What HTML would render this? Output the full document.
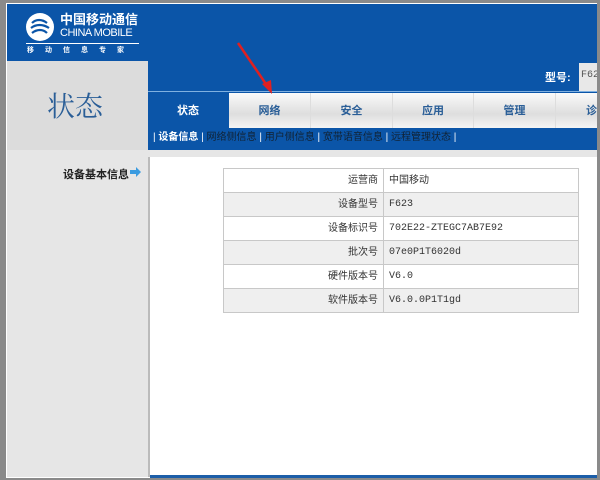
<!DOCTYPE html>
<html><head><meta charset="utf-8"><style>
*{margin:0;padding:0;box-sizing:border-box}
body{width:600px;height:480px;overflow:hidden;background:#8a8a8a;font-family:"Liberation Sans","Noto Sans CJK SC",sans-serif;position:relative}
.a{position:absolute}
td{border:1px solid #c8c8c8;height:24px;padding:0 5px;vertical-align:middle;line-height:14px}
td:first-child{text-align:right;width:160px}
td+td{font-family:'Liberation Mono','Noto Sans CJK SC',monospace}
tr:nth-child(even){background:#efefef}
</style></head><body>
<div class="a" style="left:6px;top:3px;width:591px;height:475px;background:#fff"></div>
<div class="a" style="left:7px;top:4px;width:590px;height:57px;background:#0b55a8"></div>
<svg class="a" style="left:25px;top:12px" width="30" height="30" viewBox="0 0 30 30"><circle cx="15" cy="15" r="14" fill="#fff"/><g fill="none" stroke="#0b55a8" stroke-width="2.2"><path d="M7 11c4-4 10-4 15 0M6 16c5-4 12-4 18 0M7 21c5-4 11-4 15 0"/></g></svg>
<div class="a" style="left:60px;top:12px;color:#fff;font-size:13px;font-weight:bold;line-height:15px">中国移动通信</div>
<div class="a" style="left:60px;top:27px;color:#fff;font-size:11px;line-height:12px;letter-spacing:-0.5px">CHINA MOBILE</div>
<div class="a" style="left:26px;top:43px;width:113px;height:1px;background:#fff"></div>
<div class="a" style="left:27px;top:46px;color:#fff;font-size:7px;line-height:9px;letter-spacing:11px;font-weight:bold">移动信息专家</div>
<div class="a" style="left:7px;top:61px;width:141px;height:89px;background:#dcdcdc"></div>
<div class="a" style="left:47px;top:92px;color:#2a5e97;font-size:28px;line-height:32px;font-family:'Liberation Serif','Noto Serif CJK SC',serif">状态</div>
<div class="a" style="left:7px;top:150px;width:141px;height:327px;background:#e6e6e6"></div>
<div class="a" style="left:148px;top:61px;width:449px;height:89px;background:#0b55a8"></div>
<div class="a" style="left:148px;top:91px;width:449px;height:1px;background:#7fb0e0"></div>
<div class="a" style="left:545px;top:69px;color:#fff;font-size:11px;font-weight:bold">型号:</div>
<div class="a" style="left:579px;top:63px;width:18px;height:28px;background:#e8e8e8;color:#555;font-size:10px;padding:7px 0 0 2px;overflow:hidden;font-family:'Liberation Mono',monospace">F623</div>
<div class="a" style="left:148px;top:93px;width:80px;height:35px;color:#fff;font-size:11px;font-weight:bold;text-align:center;line-height:37px">状态</div>
<div class="a" style="left:229px;top:93px;width:368px;height:35px;overflow:hidden;background:linear-gradient(#fafafa,#dedede 60%,#f4f4f4)">
<div style="display:flex;width:420px;font-size:11px;font-weight:bold;color:#2a5e97;line-height:37px">
<div style="flex:0 0 82px;text-align:center;border-right:1px solid #ddd">网络</div>
<div style="flex:0 0 82px;text-align:center;border-right:1px solid #ddd">安全</div>
<div style="flex:0 0 81px;text-align:center;border-right:1px solid #ddd">应用</div>
<div style="flex:0 0 82px;text-align:center;border-right:1px solid #ddd">管理</div>
<div style="flex:0 0 82px;text-align:center">诊断</div></div></div>
<div class="a" style="left:153px;top:131px;color:#fff;font-size:10px;white-space:nowrap;line-height:14px">| <b>设备信息</b> | <span style="color:#123">网络侧信息</span> | <span style="color:#123">用户侧信息</span> | <span style="color:#123">宽带语音信息</span> | <span style="color:#123">远程管理状态</span> |</div>
<svg class="a" style="left:230px;top:40px" width="50" height="60"><path d="M8 3L40 50" stroke="#e02020" stroke-width="2.5"/><path d="M32 44l10 10 -1-14z" fill="#e02020"/></svg>
<div class="a" style="left:148px;top:150px;width:449px;height:7px;background:#e6e6e6"></div>
<div class="a" style="left:148px;top:157px;width:2px;height:320px;background:#bbb"></div>
<div class="a" style="left:150px;top:475px;width:447px;height:3px;background:#1c5ea8"></div>
<div class="a" style="left:63px;top:166px;color:#222;font-size:11px;font-weight:bold">设备基本信息</div>
<svg class="a" style="left:129px;top:166px" width="13" height="12"><path d="M1 4h6V1l5 5-5 5V8H1z" fill="#3a9be0"/></svg>
<table class="a" style="left:223px;top:168px;width:356px;border-collapse:collapse;font-size:10px;color:#333">
<tr><td>运营商</td><td style="font-family:'Liberation Sans','Noto Sans CJK SC',sans-serif">中国移动</td></tr>
<tr><td>设备型号</td><td>F623</td></tr>
<tr><td>设备标识号</td><td>702E22-ZTEGC7AB7E92</td></tr>
<tr><td>批次号</td><td>07e0P1T6020d</td></tr>
<tr><td>硬件版本号</td><td>V6.0</td></tr>
<tr><td>软件版本号</td><td>V6.0.0P1T1gd</td></tr>
</table>
</body></html>
